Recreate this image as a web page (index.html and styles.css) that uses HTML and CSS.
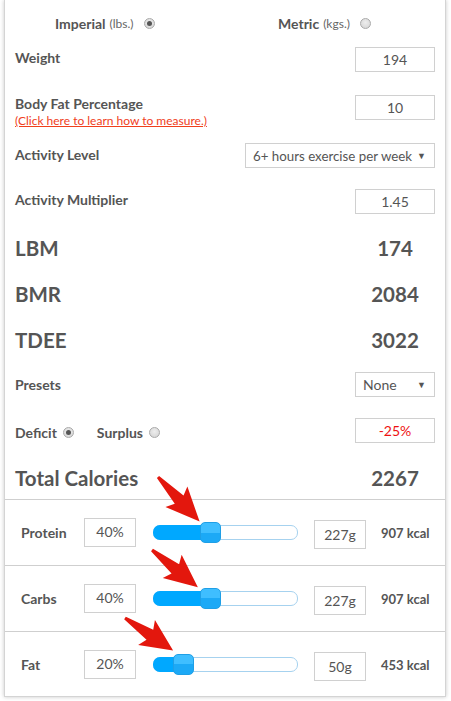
FILE: index.html
```html
<!DOCTYPE html>
<html>
<head>
<meta charset="utf-8">
<link rel="stylesheet" href="styles.css">
</head>
<body>
<div class="card">
  <div class="top">
    <div class="units">
      <div class="unit"><b>Imperial</b> <small>(lbs.)</small><span class="radio checked"></span></div>
      <div class="unit"><b>Metric</b> <small>(kgs.)</small><span class="radio"></span></div>
    </div>
    <div class="row r-weight">
      <span class="label">Weight</span>
      <div class="field">194</div>
    </div>
    <div class="row r-fat">
      <div class="label-block">
        <div class="label">Body Fat Percentage</div>
        <a class="measure" href="#">(Click here to learn how to measure.)</a>
      </div>
      <div class="field">10</div>
    </div>
    <div class="row r-activity">
      <span class="label">Activity Level</span>
      <div class="select wide"><span>6+ hours exercise per week</span><span class="caret">▼</span></div>
    </div>
    <div class="row r-mult">
      <span class="label">Activity Multiplier</span>
      <div class="field">1.45</div>
    </div>
    <div class="stats">
      <div class="stat"><span>LBM</span><span class="val">174</span></div>
      <div class="stat"><span>BMR</span><span class="val">2084</span></div>
      <div class="stat"><span>TDEE</span><span class="val">3022</span></div>
    </div>
    <div class="row r-presets">
      <span class="label light">Presets</span>
      <div class="select"><span>None</span><span class="caret">▼</span></div>
    </div>
    <div class="row r-deficit">
      <div class="choices">
        <span class="label light">Deficit</span><span class="radio checked"></span>
        <span class="label light surplus">Surplus</span><span class="radio"></span>
      </div>
      <div class="field red">-25%</div>
    </div>
    <div class="stat total"><span>Total Calories</span><span class="val">2267</span></div>
  </div>

  <div class="macro">
    <span class="mlabel">Protein</span>
    <div class="mbox">40%</div>
    <div class="slider"><div class="fill" style="width:57px"></div><div class="thumb" style="left:46px"></div></div>
    <div class="mbox grams">227g</div>
    <span class="kcal">907 kcal</span>
  </div>
  <div class="macro">
    <span class="mlabel">Carbs</span>
    <div class="mbox">40%</div>
    <div class="slider"><div class="fill" style="width:57px"></div><div class="thumb" style="left:46px"></div></div>
    <div class="mbox grams">227g</div>
    <span class="kcal">907 kcal</span>
  </div>
  <div class="macro">
    <span class="mlabel">Fat</span>
    <div class="mbox">20%</div>
    <div class="slider"><div class="fill" style="width:30px"></div><div class="thumb" style="left:19px"></div></div>
    <div class="mbox grams">50g</div>
    <span class="kcal">453 kcal</span>
  </div>
</div>

<svg class="arrows" width="451" height="701" viewBox="0 0 451 701" aria-hidden="true">
  <g fill="#e3170d">
    <polygon transform="translate(158 477) rotate(47)" points="0,-1.5 31,-6 27,-15 61,0 27,15 31,6 0,1.5"/>
    <polygon transform="translate(152 550) rotate(39)" points="0,-1.5 30,-6 26,-15 59,0 26,15 30,6 0,1.5"/>
    <polygon transform="translate(125 618) rotate(34)" points="0,-1.5 30,-6 26,-15 58,0 26,15 30,6 0,1.5"/>
  </g>
</svg>
</body>
</html>
```

FILE: styles.css
```css
html, body {
  margin: 0;
  padding: 0;
  background: #fff;
}

body {
  font-family: Lato, "Open Sans", "Liberation Sans", sans-serif;
  color: #555;
  width: 451px;
  height: 701px;
  overflow: hidden;
}

.card {
  margin: 0 5px 0 4px;
  height: 697px;
  box-sizing: border-box;
  border: 1px solid #d4d4d4;
  border-top: 0;
  box-shadow: 0 0 4px rgba(0, 0, 0, 0.22);
  background: #fff;
}

.top {
  padding: 0 10px;
}

.units {
  display: grid;
  grid-template-columns: 223px 1fr;
  padding-left: 40px;
  height: 46px;
  align-items: center;
}

.unit {
  display: flex;
  align-items: center;
  white-space: nowrap;
}

.unit b {
  font-size: 14px;
  font-weight: 700;
}

.unit small {
  font-size: 12px;
  color: #666;
  margin-left: 4px;
}

.radio {
  display: inline-block;
  width: 11px;
  height: 11px;
  box-sizing: border-box;
  border: 1px solid #aaa;
  border-radius: 50%;
  background: radial-gradient(circle at 50% 40%, #eee, #d2d2d2);
  margin-left: 10px;
  position: relative;
}

.radio.checked::after {
  content: "";
  position: absolute;
  left: 2px;
  top: 2px;
  width: 5px;
  height: 5px;
  border-radius: 50%;
  background: #555;
}

.row {
  display: flex;
  justify-content: space-between;
  align-items: center;
  height: 25px;
}

.label {
  font-size: 14px;
  font-weight: 700;
  white-space: nowrap;
}

.field {
  width: 80px;
  height: 25px;
  box-sizing: border-box;
  border: 1px solid #d0d0d0;
  text-align: center;
  line-height: 23px;
  font-size: 14px;
}

.field.red {
  color: #ee1111;
}

.r-weight {
  margin-top: 1px;
}

.r-weight .label {
  margin-bottom: 4px;
}

.r-fat {
  margin-top: 23px;
  height: auto;
  align-items: flex-start;
}

.label-block .label {
  line-height: 18px;
}

.measure {
  display: block;
  font-size: 12px;
  line-height: 16px;
  color: #f0401c;
  text-decoration: underline;
}

.r-activity {
  margin-top: 14px;
}

.r-activity .label {
  margin-bottom: 2px;
}

.select {
  height: 25px;
  width: 80px;
  box-sizing: border-box;
  border: 1px solid #d0d0d0;
  display: flex;
  justify-content: space-between;
  align-items: center;
  padding: 0 8px 0 7px;
  font-size: 14px;
  white-space: nowrap;
}

.select.wide {
  width: 190px;
  font-size: 13.3px;
}

.caret {
  font-size: 9px;
  color: #555;
}

.r-mult {
  margin-top: 21px;
}

.r-mult .label {
  margin-bottom: 4px;
}

.stats {
  margin-top: 11px;
}

.stat {
  display: flex;
  justify-content: space-between;
  align-items: center;
  height: 46px;
  font-size: 20.5px;
  font-weight: 700;
}

.stat .val {
  width: 80px;
  text-align: center;
}

.r-presets {
  margin-top: 9px;
}

.r-deficit {
  margin-top: 21px;
}

.r-deficit .choices {
  margin-top: 3px;
}

.choices {
  display: flex;
  align-items: center;
}

.choices .radio {
  margin-left: 6px;
}

.surplus {
  margin-left: 23px;
}

.stat.total {
  margin-top: 13px;
  height: 43px;
}

.macro {
  border-top: 1px solid #cfcfcf;
  height: 65px;
  display: flex;
  align-items: center;
  padding-left: 16px;
}

.mlabel {
  width: 63px;
  font-size: 14px;
  font-weight: 700;
}

.mbox {
  width: 52px;
  height: 29px;
  box-sizing: border-box;
  border: 1px solid #d0d0d0;
  text-align: center;
  line-height: 25px;
  font-size: 14px;
}

.mbox.grams {
  margin-left: 16px;
  line-height: 28px;
  margin-top: 3px;
}

.slider {
  position: relative;
  width: 145px;
  height: 15px;
  margin-left: 17px;
  box-sizing: border-box;
  border: 1px solid #a6d2ef;
  border-radius: 7px;
  background: #fff;
}

.fill {
  position: absolute;
  left: -1px;
  top: -1px;
  bottom: -1px;
  background: #00a8ff;
  border-radius: 7px 0 0 7px;
}

.thumb {
  position: absolute;
  top: -4px;
  width: 21px;
  height: 21px;
  box-sizing: border-box;
  border: 1px solid #1f9fe6;
  border-radius: 5px;
  background: linear-gradient(#3fbeff 0, #3fbeff 50%, #1ca9f6 50%, #1ca9f6 100%);
}

.kcal {
  margin-left: 15px;
  font-size: 13px;
  font-weight: 700;
  white-space: nowrap;
}

.arrows {
  position: absolute;
  left: 0;
  top: 0;
  pointer-events: none;
}
```
